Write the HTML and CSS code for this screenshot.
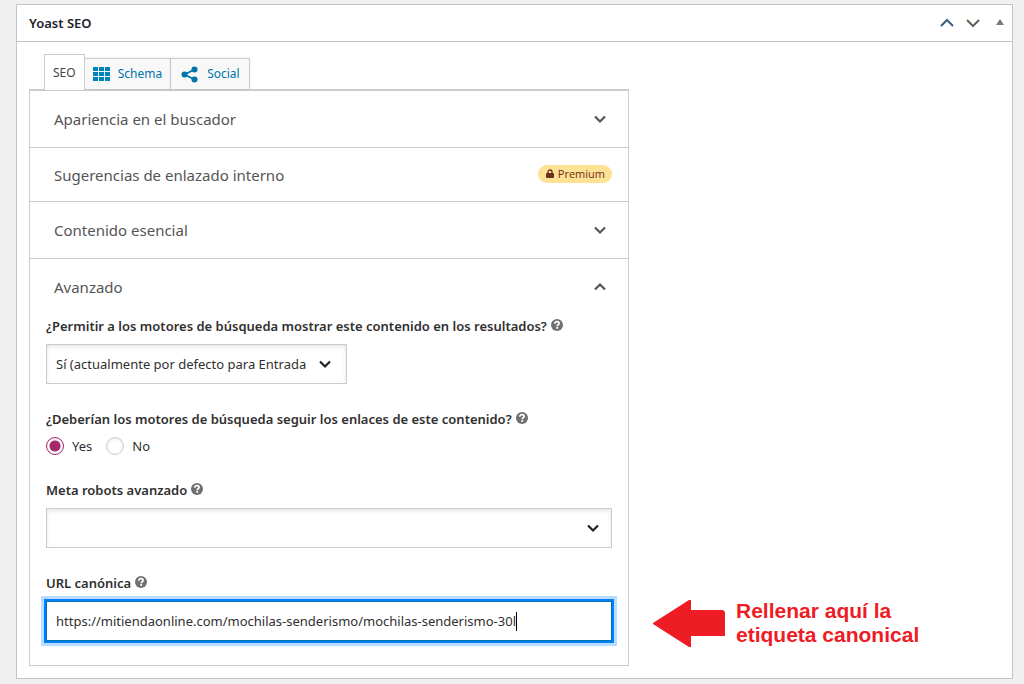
FILE: index.html
```html
<!DOCTYPE html>
<html lang="es">
<head>
  <meta charset="UTF-8" />
  <meta name="viewport" content="width=device-width, initial-scale=1.0"/>
  <title>Yoast SEO</title>
  <link rel="stylesheet" href="styles.css">
</head>
<body>

  <!-- Shared icons -->
  <svg class="sprite" aria-hidden="true">
    <symbol id="chevron-down" viewBox="0 0 14 14">
      <path d="M2 4.500l5 5 5-5" fill="none" stroke="currentColor" stroke-width="2.200"/>
    </symbol>
    <symbol id="chevron-up" viewBox="0 0 14 14">
      <path d="M2 9.500l5-5 5 5" fill="none" stroke="currentColor" stroke-width="2.200"/>
    </symbol>
    <symbol id="help" viewBox="0 0 12 12">
      <circle cx="6" cy="6" r="6" fill="currentColor"/>
      <path d="M3.800 4.700C3.800 3.300 4.800 2.700 6 2.700s2.100.6 2.100 1.700c0 1.400-1.900 1.300-1.900 2.800" fill="none" stroke="#fff" stroke-width="1.700"/>
      <rect x="5.300" y="8" width="1.800" height="1.800" fill="#fff"/>
    </symbol>
  </svg>

  <section class="postbox">
    <header class="postbox-header">
      <h2>Yoast SEO</h2>
      <div class="handle-actions">
        <button type="button" class="handle" aria-label="Subir">
          <svg class="order-icon" viewBox="0 0 14 14"><path d="M1 10l6-6 6 6" fill="none" stroke="currentColor" stroke-width="2"/></svg>
        </button>
        <button type="button" class="handle handle-down" aria-label="Bajar">
          <svg class="order-icon" viewBox="0 0 14 14"><path d="M1 4l6 6 6-6" fill="none" stroke="currentColor" stroke-width="2"/></svg>
        </button>
        <button type="button" class="handle handle-toggle" aria-label="Alternar panel">
          <svg class="toggle-icon" viewBox="0 0 8 8"><path d="M4 0l4 6H0z" fill="currentColor"/></svg>
        </button>
      </div>
    </header>

    <div class="inside">
      <div class="metabox">
        <nav class="tabs">
          <a href="#seo" class="tab active">SEO</a>
          <a href="#schema" class="tab">
            <svg class="tab-icon" viewBox="0 0 17 17" fill="#0085ba">
              <path d="M0 1h5v4H0zM6 1h5v4H6zM12 1h5v4h-5zM0 6h5v4H0zM6 6h5v4H6zM12 6h5v4h-5zM0 11h5v4H0zM6 11h5v4H6zM12 11h5v4h-5z"/>
            </svg>
            Schema
          </a>
          <a href="#social" class="tab tab-social">
            <svg class="tab-icon" viewBox="0 0 17 17" fill="#0073aa">
              <path d="M13.500 3.500L3.500 8.500l10 5" fill="none" stroke="#0073aa" stroke-width="1.800"/>
              <circle cx="13.500" cy="3.500" r="3"/>
              <circle cx="3.500" cy="8.500" r="3"/>
              <circle cx="13.500" cy="13.500" r="3"/>
            </svg>
            Social
          </a>
        </nav>

        <div class="panel" id="seo">
          <button type="button" class="section-toggle">
            Apariencia en el buscador
            <svg class="chevron"><use href="#chevron-down"/></svg>
          </button>
          <button type="button" class="section-toggle compact">
            Sugerencias de enlazado interno
            <span class="badge">
              <svg class="lock" viewBox="0 0 8 9">
                <path d="M2 4.500V3a2 2 0 0 1 4 0v1.500" fill="none" stroke="currentColor" stroke-width="1.300"/>
                <rect y="4" width="8" height="5" rx="1" fill="currentColor"/>
              </svg>
              Premium
            </span>
          </button>
          <button type="button" class="section-toggle">
            Contenido esencial
            <svg class="chevron"><use href="#chevron-down"/></svg>
          </button>
          <button type="button" class="section-toggle open" aria-expanded="true">
            Avanzado
            <svg class="chevron"><use href="#chevron-up"/></svg>
          </button>

          <form class="fields">
            <div class="field">
              <div class="field-title">
                <label for="noindex">¿Permitir a los motores de búsqueda mostrar este contenido en los resultados?</label>
                <a href="#ayuda" class="help" aria-label="Ayuda"><svg><use href="#help"/></svg></a>
              </div>
              <div class="select-wrap narrow">
                <select id="noindex">
                  <option>Sí (actualmente por defecto para Entradas)</option>
                  <option>No</option>
                </select>
                <svg class="select-arrow"><use href="#chevron-down"/></svg>
              </div>
            </div>

            <div class="field short" role="radiogroup" aria-labelledby="follow-title">
              <div class="field-title">
                <span id="follow-title">¿Deberían los motores de búsqueda seguir los enlaces de este contenido?</span>
                <a href="#ayuda" class="help" aria-label="Ayuda"><svg><use href="#help"/></svg></a>
              </div>
              <div class="radios">
                <input type="radio" name="follow" id="follow-yes" checked>
                <label for="follow-yes">Yes</label>
                <input type="radio" name="follow" id="follow-no">
                <label for="follow-no">No</label>
              </div>
            </div>

            <div class="field">
              <div class="field-title">
                <label for="robots">Meta robots avanzado</label>
                <a href="#ayuda" class="help" aria-label="Ayuda"><svg><use href="#help"/></svg></a>
              </div>
              <div class="select-wrap">
                <select id="robots">
                  <option></option>
                </select>
                <svg class="select-arrow"><use href="#chevron-down"/></svg>
              </div>
            </div>

            <div class="field last">
              <div class="field-title">
                <label for="canonical">URL canónica</label>
                <a href="#ayuda" class="help" aria-label="Ayuda"><svg><use href="#help"/></svg></a>
              </div>
              <div class="text-box focused">
                <input type="text" id="canonical" value="https://mitiendaonline.com/mochilas-senderismo/mochilas-senderismo-30l">
                <span class="caret"></span>
              </div>
            </div>
          </form>
        </div>
      </div>

      <aside class="note">
        <svg class="note-arrow" viewBox="0 0 72 47">
          <path d="M0 23L36 0h2v10h32l2 2v24H38v11h-2L0 24z" fill="#ee1c24"/>
        </svg>
        <p>Rellenar aquí la<br>etiqueta canonical</p>
      </aside>
    </div>
  </section>

</body>
</html>
```

FILE: styles.css
```css
* {
  box-sizing: border-box;
}

body {
  margin: 0;
  padding: 4px 11px 4px 16px;
  background-color: #f0f0f0;
  color: #303030;
  font-family: "Noto Sans", "Open Sans", sans-serif;
  font-size: 13px;
  line-height: 20px;
}

button, input, select {
  font: inherit;
  color: inherit;
}

.sprite {
  position: absolute;
  width: 0;
  height: 0;
}

.postbox {
  background-color: #fff;
  border: 1px solid #c3c4c7;
}

.postbox-header {
  display: flex;
  align-items: center;
  justify-content: space-between;
  height: 37px;
  padding: 0 8px 0 12px;
  border-bottom: 1px solid #c3c4c7;
}

.postbox-header h2 {
  margin: 0;
  font-size: 13px;
  font-weight: 600;
  color: #1d2327;
}

.handle-actions {
  display: flex;
  align-items: center;
  gap: 12px;
}

.handle {
  display: flex;
  padding: 0;
  border: 0;
  background: none;
  color: #3c5f80;
}

.handle-down {
  color: #5f6550;
}

.handle-toggle {
  margin-left: 4px;
  color: #787c82;
}

.order-icon {
  width: 14px;
  height: 14px;
}

.toggle-icon {
  width: 8px;
  height: 8px;
}

.inside {
  display: flex;
  align-items: flex-end;
  padding: 12px;
}

.metabox {
  flex: 0 1 600px;
  min-width: 0;
}

/* Tabs */
.tabs {
  display: flex;
  align-items: flex-end;
  padding-left: 15px;
}

.tab {
  display: flex;
  align-items: center;
  gap: 8px;
  height: 31px;
  padding: 0 8px;
  border: 1px solid #ccc;
  border-left: 0;
  border-bottom: 0;
  background-color: #f8f8f8;
  box-shadow: 0 0 4px rgba(0, 0, 0, 0.08);
  color: #0073aa;
  font-size: 12px;
  text-decoration: none;
}

.tab.active {
  z-index: 1;
  height: 36px;
  margin-bottom: -1px;
  border-left: 1px solid #ccc;
  background-color: #fff;
  box-shadow: none;
  color: #444;
}

.tab-social {
  gap: 9px;
  padding: 0 9px 0 10px;
}

.tab-icon {
  width: 17px;
  height: 17px;
}

.panel {
  border: 1px solid #ccc;
  border-top-width: 2px;
}

.section-toggle {
  display: flex;
  align-items: center;
  justify-content: space-between;
  width: 100%;
  height: 57px;
  padding: 0 16px 0 24px;
  border: 0;
  border-bottom: 1px solid #ccc;
  background-color: #fff;
  color: #555;
  font-size: 15px;
  text-align: left;
}

.section-toggle.compact {
  height: 54px;
}

.section-toggle.open {
  height: 55px;
  border-bottom: 0;
}

.chevron {
  width: 14px;
  height: 14px;
  margin-right: 5px;
  color: #555;
}

.badge {
  display: flex;
  align-items: center;
  gap: 4px;
  height: 18px;
  margin-bottom: 2px;
  padding: 0 7px 0 8px;
  border-radius: 9px;
  background-color: #fde293;
  color: #702c20;
  font-family: "Open Sans", "Noto Sans", sans-serif;
  font-size: 11px;
}

.lock {
  width: 8px;
  height: 9px;
}

/* Advanced fields */
.fields {
  padding: 2px 16px 24px;
}

.field {
  margin-bottom: 25px;
}

.field.short {
  margin-bottom: 24px;
}

.field.last {
  margin-bottom: 0;
}

.field-title {
  display: flex;
  align-items: center;
  gap: 4px;
  margin-bottom: 8px;
  font-weight: 600;
}

.short .field-title {
  margin-bottom: 7px;
}

.help {
  display: flex;
  padding-bottom: 2px;
  color: #707070;
}

.help svg {
  width: 12px;
  height: 12px;
}

.select-wrap {
  position: relative;
}

.select-wrap.narrow {
  width: 301px;
}

.select-wrap select {
  display: block;
  width: 100%;
  height: 40px;
  padding: 0 40px 0 9px;
  border: 1px solid #ccc;
  border-radius: 0;
  background-color: #fff;
  box-shadow: inset 0 2px 4px rgba(0, 0, 0, 0.1);
  appearance: none;
}

.select-arrow {
  position: absolute;
  top: 13px;
  right: 12px;
  width: 14px;
  height: 14px;
  color: #1d2327;
  pointer-events: none;
}

.narrow .select-arrow {
  right: 15px;
}

.radios {
  display: flex;
  align-items: center;
  gap: 8px;
}

.radios label {
  margin-right: 6px;
}

.radios input {
  width: 18px;
  height: 18px;
  margin: 0;
  border: 1px solid #ccc;
  border-radius: 50%;
  background-color: #fff;
  box-shadow: inset 0 1px 3px rgba(0, 0, 0, 0.1);
  appearance: none;
}

.radios input:checked {
  border-color: #a4286a;
  background: radial-gradient(circle, #a4286a 5px, #fff 6px);
}

.text-box {
  display: flex;
  align-items: center;
  height: 40px;
  padding: 0 9px;
  border: 1px solid #ccc;
}

.text-box input {
  max-width: 100%;
  padding: 0;
  border: 0;
  outline: 0;
  background: none;
  field-sizing: content;
}

.text-box.focused {
  border-color: #0073aa;
  box-shadow: 0 0 0 2px #007fff, 0 0 0 5px #b8deff;
}

.caret {
  width: 1px;
  height: 19px;
  background-color: #000;
}

/* Red note beside the canonical field */
.note {
  display: flex;
  align-items: center;
  gap: 11px;
  margin: 0 0 19px 24px;
  color: #ee1c24;
}

.note-arrow {
  flex: none;
  width: 72px;
  height: 47px;
}

.note p {
  margin: 0;
  font-family: "Liberation Sans", Arial, sans-serif;
  font-size: 21px;
  font-weight: bold;
  line-height: 24px;
}

@media (max-width: 900px) {
  .inside {
    flex-direction: column;
    align-items: stretch;
  }

  .metabox {
    flex-basis: auto;
  }

  .note {
    margin-top: 20px;
  }
}
```
